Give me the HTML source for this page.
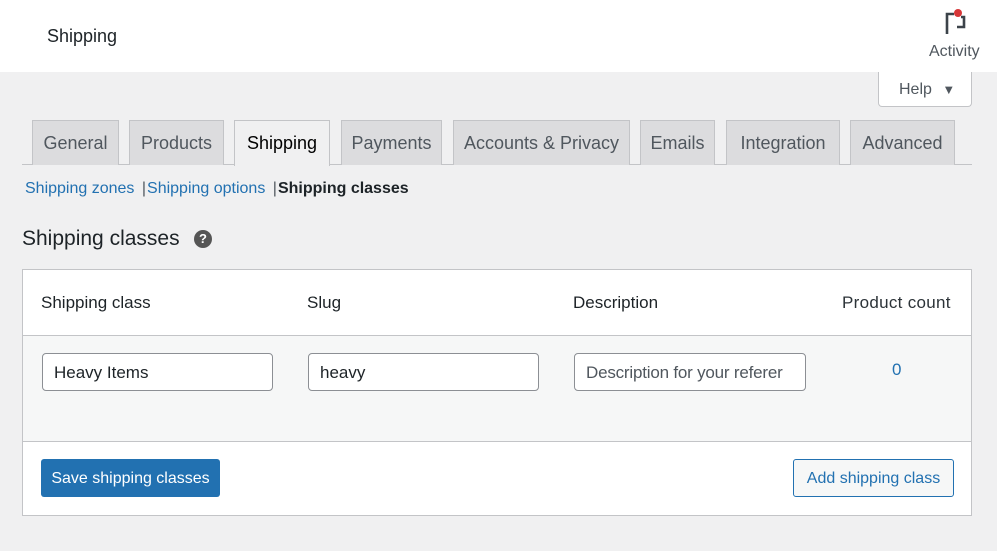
<!DOCTYPE html>
<html><head><meta charset="utf-8"><style>
*{box-sizing:border-box;margin:0;padding:0}
body{width:997px;height:551px;background:#f0f0f1;font-family:"Liberation Sans",sans-serif;color:#1d2327;position:relative;overflow:hidden}
.a{position:absolute}
.hdr{left:0;top:0;width:997px;height:72px;background:#fff}
.tab{top:120px;height:45px;background:#dcdcde;border:1px solid #c3c4c7;border-bottom:none;font-size:18px;color:#50575e;line-height:45px;text-align:center}
.tab.on{background:#f0f0f1;color:#000;height:46px}
.inp{top:353px;height:38px;width:231px;border:1px solid #8c8f94;border-radius:4px;background:#fff;font-size:17px;line-height:38px;padding-left:11px;white-space:nowrap;overflow:hidden}
.th{top:293px;font-size:17px;color:#1d2327}
</style></head><body>
<div class="a hdr"></div>
<div class="a" style="left:47px;top:26px;font-size:18px">Shipping</div>
<svg class="a" style="left:944px;top:8px" width="24" height="28" viewBox="0 0 24 28">
<path d="M3 26V6h7M17 9h3v10h-7" fill="none" stroke="#3c434a" stroke-width="2.6"/>
<circle cx="14" cy="5" r="4" fill="#d63638"/></svg>
<div class="a" style="left:929px;top:43px;font-size:16px;color:#50575e">Activity</div>
<div class="a" style="left:878px;top:72px;width:94px;height:35px;background:#fff;border:1px solid #c3c4c7;border-top:none;border-radius:0 0 4px 4px;font-size:16px;color:#50575e;line-height:36px;padding-left:20px">Help <span style="font-size:13px;margin-left:6px">▼</span></div>
<div class="a" style="left:22px;top:164px;width:950px;height:1px;background:#c3c4c7"></div>
<div class="a tab" style="left:32px;width:87px">General</div>
<div class="a tab" style="left:129px;width:95px">Products</div>
<div class="a tab on" style="left:234px;width:96px">Shipping</div>
<div class="a tab" style="left:341px;width:101px">Payments</div>
<div class="a tab" style="left:453px;width:177px">Accounts &amp; Privacy</div>
<div class="a tab" style="left:640px;width:75px">Emails</div>
<div class="a tab" style="left:726px;width:114px">Integration</div>
<div class="a tab" style="left:850px;width:105px">Advanced</div>
<div class="a" style="left:25px;top:180px;font-size:16px;color:#2271b1;white-space:nowrap">Shipping zones <span style="color:#50575e;margin:0 1px 0 3px">|</span>Shipping options <span style="color:#50575e;margin:0 1px 0 3px">|</span><b style="color:#1d2327">Shipping classes</b></div>
<div class="a" style="left:22px;top:227px;font-size:21px;color:#1d2327">Shipping classes</div>
<div class="a" style="left:194px;top:230px;width:18px;height:18px;border-radius:50%;background:#555;color:#fff;font-size:13px;font-weight:bold;text-align:center;line-height:18px">?</div>
<div class="a" style="left:22px;top:269px;width:950px;height:247px;background:#fff;border:1px solid #c3c4c7"></div>
<div class="a" style="left:23px;top:335px;width:948px;height:107px;background:#f6f7f7;border-top:1px solid #c3c4c7;border-bottom:1px solid #c3c4c7"></div>
<div class="a th" style="left:41px">Shipping class</div>
<div class="a th" style="left:307px">Slug</div>
<div class="a th" style="left:573px">Description</div>
<div class="a th" style="left:842px;color:#2c3338;letter-spacing:0.3px">Product count</div>
<div class="a inp" style="left:42px">Heavy Items</div>
<div class="a inp" style="left:308px">heavy</div>
<div class="a inp" style="left:574px;width:232px;color:#50575e;padding-right:10px;letter-spacing:-0.2px">Description for your referer</div>
<div class="a" style="left:892px;top:360px;font-size:17px;color:#2271b1">0</div>
<div class="a" style="left:41px;top:459px;width:179px;height:38px;background:#2271b1;border-radius:3px;color:#fff;font-size:16px;line-height:40px;text-align:center">Save shipping classes</div>
<div class="a" style="left:793px;top:459px;width:161px;height:38px;background:#f6f7f7;border:1px solid #2271b1;border-radius:3px;color:#2271b1;font-size:16px;line-height:38px;text-align:center">Add shipping class</div>
</body></html>
